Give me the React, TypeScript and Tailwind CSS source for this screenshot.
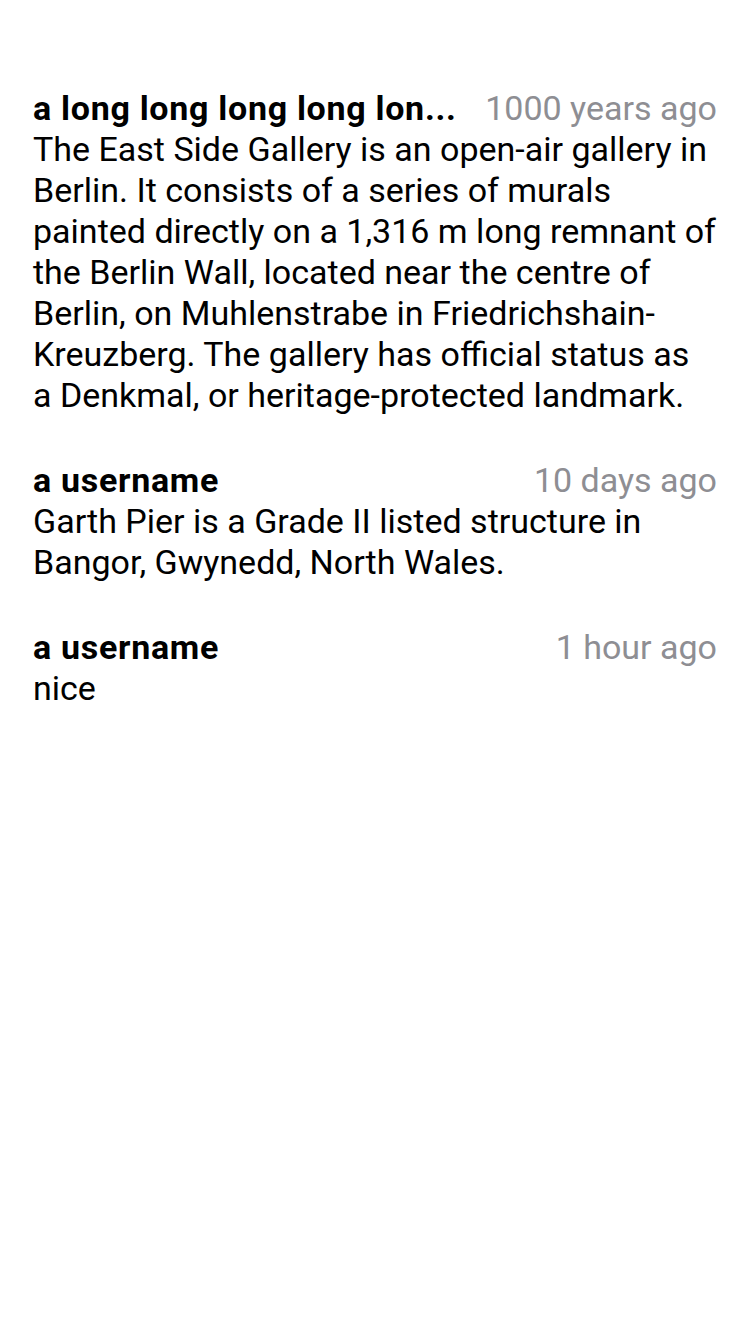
const comments = [
  {
    name: 'a long long long long lon...',
    time: '1000 years ago',
    body: 'The East Side Gallery is an open-air gallery in Berlin. It consists of a series of murals painted directly on a 1,316 m long remnant of the Berlin Wall, located near the centre of Berlin, on Muhlenstrabe in Friedrichshain-Kreuzberg. The gallery has official status as a\u00A0Denkmal, or heritage-protected landmark.',
  },
  {
    name: 'a username',
    time: '10 days ago',
    body: 'Garth Pier is a Grade II listed structure in Bangor, Gwynedd, North Wales.',
  },
  {
    name: 'a username',
    time: '1 hour ago',
    body: 'nice',
  },
];

export default function App() {
  return (
    <div
      className="min-h-[1334px] w-[750px] bg-white px-[33px] pt-[88px] text-[34px] leading-[41px] text-black"
      style={{ fontFamily: 'Roboto, "Liberation Sans", sans-serif' }}
    >
      <div className="flex flex-col gap-[44px]">
        {comments.map((c, i) => (
          <div key={i} className="flex flex-col">
            <div className="flex items-baseline">
              <span className="min-w-0 flex-1 truncate font-bold tracking-[0.7px]">{c.name}</span>
              <span className="ml-[24px] shrink-0 text-[#8e8e93]">{c.time}</span>
            </div>
            <p>{c.body}</p>
          </div>
        ))}
      </div>
    </div>
  );
}
